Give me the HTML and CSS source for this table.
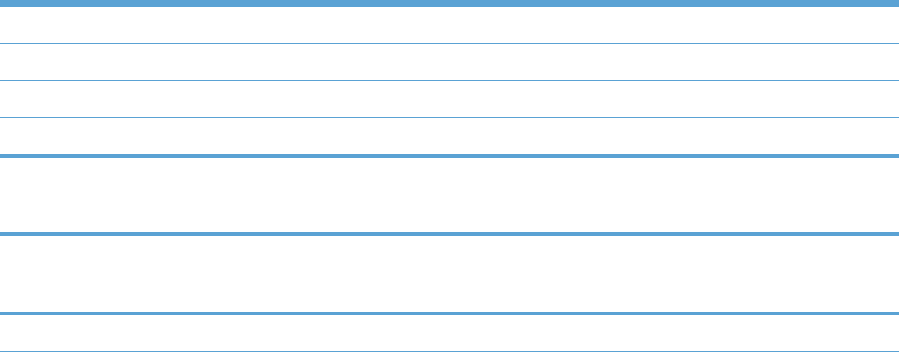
FILE: index.html
```html
<!DOCTYPE html>
<html lang="en">
<head>
    <meta charset="UTF-8">
    <meta name="viewport" content="width=device-width, initial-scale=1.0">
    <title>Tables</title>
    <link rel="stylesheet" href="styles.css">
</head>
<body>
    <div class="page">
        <div class="table table-main">
            <div class="row"></div>
            <div class="row"></div>
            <div class="row"></div>
            <div class="row row-end"></div>
        </div>

        <div class="table table-notes">
            <div class="row row-tall row-head"></div>
            <div class="row"></div>
        </div>
    </div>
</body>
</html>
```

FILE: styles.css
```css
body {
    margin: 0;
    font-family: "Liberation Sans", Arial, sans-serif;
    background-color: #ffffff;
}
.page {
    display: flex;
    flex-direction: column;
    width: 899px;
}
.table {
    display: flex;
    flex-direction: column;
}
.table-main {
    border-top: 7px solid #5aa2d4;
}
.table-notes {
    margin-top: 74px;
    border-top: 4px solid #5aa2d4;
}
.row {
    height: 36px;
    border-bottom: 1px solid #5aa2d4;
}
.row-end {
    border-bottom-width: 4px;
}
.row-tall {
    height: 76px;
}
.row-head {
    border-bottom-width: 3px;
}
```
